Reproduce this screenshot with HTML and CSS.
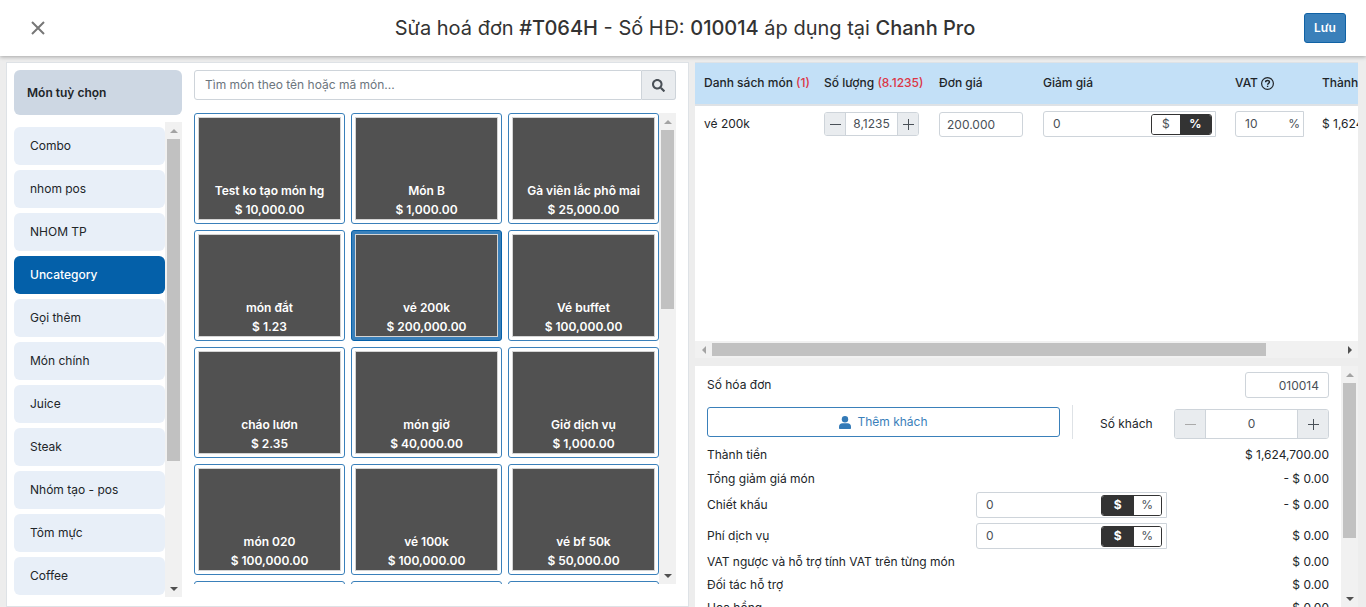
FILE: index.html
```html
<!DOCTYPE html>
<html lang="vi">
<head>
<meta charset="utf-8">
<meta name="viewport" content="width=device-width, initial-scale=1">
<title>Sửa hoá đơn</title>
<link rel="stylesheet" href="styles.css">
</head>
<body>
<div class="app">
  <header class="topbar">
    <button class="close" type="button" aria-label="Đóng"><svg width="14" height="14" viewBox="0 0 14 14"><path d="M1 1l12 12M13 1L1 13" fill="none" stroke="#777" stroke-width="2"/></svg></button>
    <h1>Sửa hoá đơn <b>#T064H</b> - Số HĐ: <b>010014</b> áp dụng tại <b>Chanh Pro</b></h1>
    <button class="save" type="button">Lưu</button>
  </header>
  <main class="content">
    <section class="menu">
      <nav class="groups">
        <button class="custom" type="button">Món tuỳ chọn</button>
        <div class="scroller">
          <div class="group-list">
            <button type="button">Combo</button>
            <button type="button">nhom pos</button>
            <button type="button">NHOM TP</button>
            <button type="button" class="active">Uncategory</button>
            <button type="button">Gọi thêm</button>
            <button type="button">Món chính</button>
            <button type="button">Juice</button>
            <button type="button">Steak</button>
            <button type="button">Nhóm tạo - pos</button>
            <button type="button">Tôm mực</button>
            <button type="button">Coffee</button>
          </div>
          <div class="bar"><i class="up"></i><div class="track"><div class="thumb thumb-groups"></div></div><i class="down"></i></div>
        </div>
      </nav>
      <div class="products">
        <form class="search">
          <input type="text" placeholder="Tìm món theo tên hoặc mã món..." aria-label="Tìm món">
          <button type="button" aria-label="Tìm"><svg width="13" height="13" viewBox="0 0 512 512"><path fill="#495057" d="M505 442.700 405.300 343c-4.500-4.500-10.600-7-17-7H372c27.600-35.300 44-79.700 44-128C416 93.100 322.900 0 208 0S0 93.100 0 208s93.100 208 208 208c48.300 0 92.700-16.400 128-44v16.300c0 6.400 2.500 12.500 7 17l99.700 99.700c9.400 9.400 24.600 9.400 33.900 0l28.300-28.300c9.400-9.400 9.400-24.600.1-34zM208 336c-70.700 0-128-57.200-128-128 0-70.700 57.200-128 128-128 70.700 0 128 57.200 128 128 0 70.700-57.200 128-128 128z"/></svg></button>
        </form>
        <div class="scroller">
          <div class="cards">
            <button class="card" type="button"><span>Test ko tạo món hg<br>$ 10,000.00</span></button>
            <button class="card" type="button"><span>Món B<br>$ 1,000.00</span></button>
            <button class="card" type="button"><span>Gà viên lắc phô mai<br>$ 25,000.00</span></button>
            <button class="card" type="button"><span>món đắt<br>$ 1.23</span></button>
            <button class="card chosen" type="button"><span>vé 200k<br>$ 200,000.00</span></button>
            <button class="card" type="button"><span>Vé buffet<br>$ 100,000.00</span></button>
            <button class="card" type="button"><span>cháo lươn<br>$ 2.35</span></button>
            <button class="card" type="button"><span>món giờ<br>$ 40,000.00</span></button>
            <button class="card" type="button"><span>Giờ dịch vụ<br>$ 1,000.00</span></button>
            <button class="card" type="button"><span>món 020<br>$ 100,000.00</span></button>
            <button class="card" type="button"><span>vé 100k<br>$ 100,000.00</span></button>
            <button class="card" type="button"><span>vé bf 50k<br>$ 50,000.00</span></button>
            <button class="card" type="button"><span></span></button>
            <button class="card" type="button"><span></span></button>
            <button class="card" type="button"><span></span></button>
          </div>
          <div class="bar"><i class="up"></i><div class="track"><div class="thumb thumb-cards"></div></div><i class="down"></i></div>
        </div>
      </div>
    </section>
    <section class="order">
      <div class="lines">
        <div class="table-wrap">
          <table>
            <colgroup><col class="c-name"><col class="c-qty"><col class="c-price"><col class="c-disc"><col class="c-vat"><col class="c-total"></colgroup>
            <thead>
              <tr>
                <th>Danh sách món <em>(1)</em></th>
                <th>Số lượng <em>(8.1235)</em></th>
                <th>Đơn giá</th>
                <th>Giảm giá</th>
                <th><span class="vat-head">VAT <svg width="13" height="13" viewBox="0 0 13 13" fill="none" stroke="#212529"><circle cx="6.500" cy="6.500" r="5.900" stroke-width="1.200"/><path d="M4.600 5.200C4.600 3 8.500 3 8.500 5.100c0 1.300-1.900 1.300-1.900 2.600M6.600 8.700v1.400" stroke-width="1.400"/></svg></span></th>
                <th>Thành tiền</th>
              </tr>
            </thead>
            <tbody>
              <tr>
                <td>vé 200k</td>
                <td><div class="stepper small"><button type="button" aria-label="Giảm"><svg width="11" height="11" viewBox="0 0 11 11"><path d="M0 5.500h11" stroke="#495057"/></svg></button><input type="text" value="8,1235" aria-label="Số lượng"><button type="button" aria-label="Tăng"><svg width="11" height="11" viewBox="0 0 11 11"><path d="M0 5.500h11M5.500 0v11" stroke="#495057"/></svg></button></div></td>
                <td><input class="field price" type="text" value="200.000" aria-label="Đơn giá"></td>
                <td><div class="amount"><input type="text" value="0" aria-label="Giảm giá"><div class="switch"><button type="button">$</button><button type="button" class="on">%</button></div></div></td>
                <td><div class="amount vat"><input type="text" value="10" aria-label="VAT"><span>%</span></div></td>
                <td>$ 1,624,700.00</td>
              </tr>
            </tbody>
          </table>
        </div>
        <div class="bar horizontal"><i class="left"></i><div class="track"><div class="thumb"></div></div><i class="right"></i></div>
      </div>
      <div class="summary">
        <div class="rows">
          <div class="row invoice"><label for="invoice">Số hóa đơn</label><input class="field" id="invoice" type="text" value="010014"></div>
          <div class="row guests">
            <button class="add" type="button"><svg width="12" height="13" viewBox="0 0 12 13" fill="#337ab7"><circle cx="6" cy="3.200" r="3.200"/><path d="M3.400 7.300h5.200C10.600 7.300 12 8.800 12 10.600V12c0 .6-.4 1-1 1H1c-.6 0-1-.4-1-1v-1.400C0 8.800 1.400 7.300 3.400 7.300z"/></svg>Thêm khách</button>
            <div class="count"><label for="guests">Số khách</label>
              <div class="stepper"><button type="button" disabled aria-label="Bớt khách"><svg width="11" height="11" viewBox="0 0 11 11"><path d="M0 5.500h11" stroke="#aaa"/></svg></button><input id="guests" type="text" value="0"><button type="button" aria-label="Thêm một khách"><svg width="11" height="11" viewBox="0 0 11 11"><path d="M0 5.500h11M5.500 0v11" stroke="#495057"/></svg></button></div>
            </div>
          </div>
          <div class="row"><span>Thành tiền</span><span>$ 1,624,700.00</span></div>
          <div class="row"><span>Tổng giảm giá món</span><span>- $ 0.00</span></div>
          <div class="entries">
            <div class="row entry"><label for="discount">Chiết khấu</label><div class="amount"><input id="discount" type="text" value="0"><div class="switch"><button type="button" class="on">$</button><button type="button">%</button></div></div><span>- $ 0.00</span></div>
            <div class="row entry"><label for="fee">Phí dịch vụ</label><div class="amount"><input id="fee" type="text" value="0"><div class="switch"><button type="button" class="on">$</button><button type="button">%</button></div></div><span>$ 0.00</span></div>
          </div>
          <div class="row extra"><span>VAT ngược và hỗ trợ tính VAT trên từng món</span><span>$ 0.00</span></div>
          <div class="row extra"><span>Đối tác hỗ trợ</span><span>$ 0.00</span></div>
          <div class="row extra"><span>Hoa hồng</span><span>$ 0.00</span></div>
        </div>
        <div class="bar"><i class="up"></i><div class="track"><div class="thumb thumb-summary"></div></div><i class="down"></i></div>
      </div>
    </section>
  </main>
</div>
</body>
</html>
```

FILE: styles.css
```css
* { box-sizing: border-box; }
body { margin: 0; background: #ededed; color: #212529; font: 12px/18px Inter, "Liberation Sans", sans-serif; }
button, input { font: inherit; color: inherit; margin: 0; padding: 0; }
button { cursor: pointer; }
input { min-width: 0; outline: none; }
svg { display: block; flex: none; }

.app { height: 100vh; display: flex; flex-direction: column; overflow: hidden; }

.topbar { display: flex; align-items: center; flex: none; height: 56px; padding: 0 20px 0 24px; background: #fff; box-shadow: 0 1px 4px rgba(0, 0, 0, .3); }
.close { display: grid; place-items: center; width: 28px; height: 28px; margin-right: 14px; border: 0; background: none; }
.topbar h1 { flex: 1; margin: 0; text-align: center; font-size: 20px; line-height: 28px; font-weight: 400; color: #333; }
.topbar b { font-weight: 500; }
.save { width: 42px; height: 30px; border: 1px solid #1062a5; border-radius: 3px; background: #3a80ba; color: #fff; font-weight: 600; }

.content { flex: 1; min-height: 0; display: grid; grid-template-columns: minmax(0, 683fr) minmax(0, 663fr); grid-template-rows: minmax(0, 1fr); gap: 6px; padding: 6px 8px 0 6px; }
.menu { display: flex; gap: 12px; padding: 7px 12px 9px 7px; background: #fff; border: 1px solid #dee2e6; }
.groups { flex: 0 0 168px; display: flex; flex-direction: column; gap: 7px; }
.custom { flex: none; height: 45px; padding: 0 13px; border: 0; border-radius: 6px; background: #cdd7e3; text-align: left; font-weight: 600; }
.scroller { flex: 1; min-height: 0; display: flex; overflow: hidden; }
.group-list { flex: 1; display: flex; flex-direction: column; gap: 5px; padding-top: 5px; overflow: hidden; }
.group-list button { flex: none; height: 38px; padding: 0 16px; border: 0; border-radius: 6px; background: #e8eff8; text-align: left; }
.group-list .active { background: #0460a9; color: #fff; font-weight: 500; }

.products { flex: 1; min-width: 0; display: flex; flex-direction: column; gap: 13px; padding-bottom: 13px; }
.search { display: flex; flex: none; height: 30px; }
.search input { flex: 1; padding: 0 10px; border: 1px solid #ced4da; border-radius: 3px 0 0 3px; }
.search input::placeholder { color: #6c757d; opacity: 1; }
.search button { display: grid; place-items: center; width: 34px; border: 1px solid #ced4da; border-left-width: 0; border-radius: 0 3px 3px 0; background: #e9ecef; }
.cards { flex: 1; display: grid; grid-template-columns: repeat(3, 1fr); grid-auto-rows: 111px; gap: 6px; overflow: hidden; }
.card { display: flex; padding: 3px; border: 1px solid #3a80ba; border-radius: 3px; background: #fff; }
.card span { flex: 1; align-self: stretch; display: grid; place-content: end center; border: 1px solid #d4d4d4; background: #515151; color: #fff; font-weight: 600; line-height: 19px; }
.card.chosen { border-color: #0460a9; background: #3a80ba; }

.bar { flex: none; width: 17px; display: flex; flex-direction: column; background: #f1f1f1; }
.bar i { flex: none; width: 17px; height: 17px; display: grid; place-items: center; }
.bar i::before { content: ""; border: 4px solid transparent; }
.bar .up::before { border-top-width: 0; border-bottom-color: #a3a3a3; }
.bar .down::before { border-bottom-width: 0; border-top-color: #505050; }
.bar .left::before { border-left-width: 0; border-right-color: #a3a3a3; }
.bar .right::before { border-right-width: 0; border-left-color: #505050; }
.track { flex: 1; min-height: 0; padding: 0 2px; }
.thumb { height: 100%; background: #c1c1c1; }
.thumb-groups { height: 73%; }
.thumb-cards { height: 41%; }
.thumb-summary { height: 75%; }
.bar.horizontal { width: auto; height: 17px; flex-direction: row; }
.horizontal .track { padding: 2px 0; }
.horizontal .thumb { width: 88%; }

.order { display: flex; flex-direction: column; gap: 8px; }
.lines { flex: 296 1 0; min-height: 0; display: flex; flex-direction: column; background: #fff; }
.table-wrap { flex: 1; overflow: hidden; }
table { width: 738px; table-layout: fixed; border-collapse: collapse; }
.c-name { width: 120px; } .c-qty { width: 115px; } .c-price { width: 104px; } .c-disc { width: 192px; } .c-vat { width: 87px; }
th { height: 42px; padding: 0 0 0 9px; border-top: 1px solid #dee2e6; border-bottom: 2px solid #dee2e6; background: #c3e0f7; text-align: left; font-weight: 500; white-space: nowrap; }
th em { font-style: normal; color: #dc3545; }
td { height: 38px; padding: 0 0 0 9px; white-space: nowrap; }
.vat-head { display: flex; align-items: center; gap: 3px; }

.stepper { display: flex; height: 30px; width: 155px; border: 1px solid #ced4da; border-radius: 3px; overflow: hidden; color: #495057; }
.stepper button { display: grid; place-items: center; flex: 0 0 30px; border: 0; background: #e9ecef; }
.stepper input { flex: 1; width: 0; border: solid #ced4da; border-width: 0 1px; text-align: center; }
.stepper.small { width: 95px; height: 24px; }
.stepper.small button { flex-basis: 20px; }
.field { width: 84px; height: 26px; padding: 0 7px; border: 1px solid #ced4da; border-radius: 3px; color: #495057; }
.price { display: block; height: 25px; }
.amount { display: flex; align-items: center; width: 173px; height: 26px; padding-right: 3px; border: 1px solid #ced4da; border-radius: 3px 0 0 3px; color: #495057; background: #fff; }
.amount input { flex: 1; width: 0; padding-left: 9px; border: 0; background: none; }
.amount.vat { width: 69px; }
.switch { display: flex; flex: none; width: 61px; height: 21px; border: 1px solid #333; border-radius: 3px; overflow: hidden; }
.switch button { flex: 1; border: 0; background: #fff; }
.switch .on { flex-basis: 4px; background: #333; color: #fff; font-weight: 700; }

.summary { flex: 241 1 0; min-height: 0; display: flex; background: #fff; overflow: hidden; }
.rows { flex: 1; padding: 6px 12px 0; overflow: hidden; }
.row { display: flex; align-items: center; justify-content: space-between; height: 24px; }
.row.invoice { height: 26px; margin-bottom: 7px; }
.invoice .field { padding-right: 9px; text-align: right; }
.row.guests { height: 34px; margin-bottom: 4px; gap: 12px; align-items: stretch; }
.add { flex: 1; height: 30px; margin-top: 2px; display: flex; align-items: center; justify-content: center; gap: 6px; border: 1px solid #3a80ba; border-radius: 3px; background: #fff; color: #3a80ba; }
.count { flex: 0 0 257px; display: flex; align-items: flex-end; justify-content: space-between; padding-left: 27px; border-left: 1px solid #dee2e6; }
.count label { line-height: 30px; }
.entries { display: grid; gap: 5px; padding: 1px 0; }
.row.entry { display: grid; grid-template-columns: 269px 191px 1fr; height: 26px; }
.row.extra { height: 23px; }
.entry > span { text-align: right; }
.entry .amount { width: 100%; padding-right: 4px; }
```
